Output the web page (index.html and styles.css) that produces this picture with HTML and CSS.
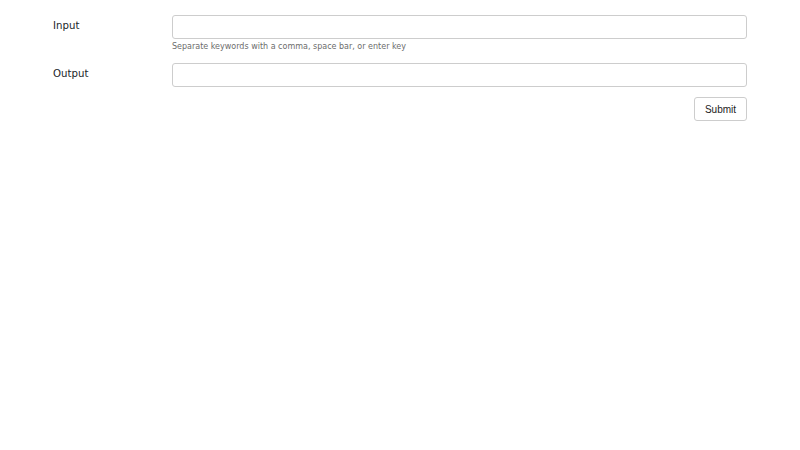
FILE: index.html
```html
<!DOCTYPE html>
<html>
<head>
<meta charset="utf-8">
<link rel="stylesheet" href="styles.css">
</head>
<body>
<form class="form">
  <div class="row">
    <label class="label">Input</label>
    <div class="field">
      <input class="control" type="text">
      <div class="help">Separate keywords with a comma, space bar, or enter key</div>
    </div>
  </div>
  <div class="row">
    <label class="label">Output</label>
    <div class="field">
      <input class="control" type="text">
    </div>
  </div>
  <div class="actions">
    <button class="btn" type="button">Submit</button>
  </div>
</form>
</body>
</html>
```
FILE: styles.css
```css
html, body {
  margin: 0;
  padding: 0;
  background: #fff;
}
.form {
  margin: 0 53px;
  padding-top: 15px;
  font-family: "DejaVu Sans", sans-serif;
  color: #212529;
}
.row {
  display: flex;
  margin-bottom: 10px;
}
.label {
  width: 119px;
  flex: none;
  font-size: 10.2px;
  line-height: 22px;
}
.field {
  flex: 1;
  display: flex;
  flex-direction: column;
}
.control {
  box-sizing: border-box;
  height: 24px;
  width: 100%;
  margin: 0;
  border: 1px solid #cdcdcd;
  border-radius: 3px;
  background: #fff;
  outline: none;
}
.help {
  font-size: 8px;
  color: #6c6c6c;
  margin-top: 2px;
  line-height: 12px;
}
.actions {
  display: flex;
  justify-content: flex-end;
}
.btn {
  box-sizing: border-box;
  height: 24px;
  width: 53px;
  padding: 0;
  border: 1px solid #cdcdcd;
  border-radius: 3px;
  background: #fff;
  font-family: "Liberation Sans", Arial, sans-serif;
  font-size: 10px;
  color: #222;
}
```
